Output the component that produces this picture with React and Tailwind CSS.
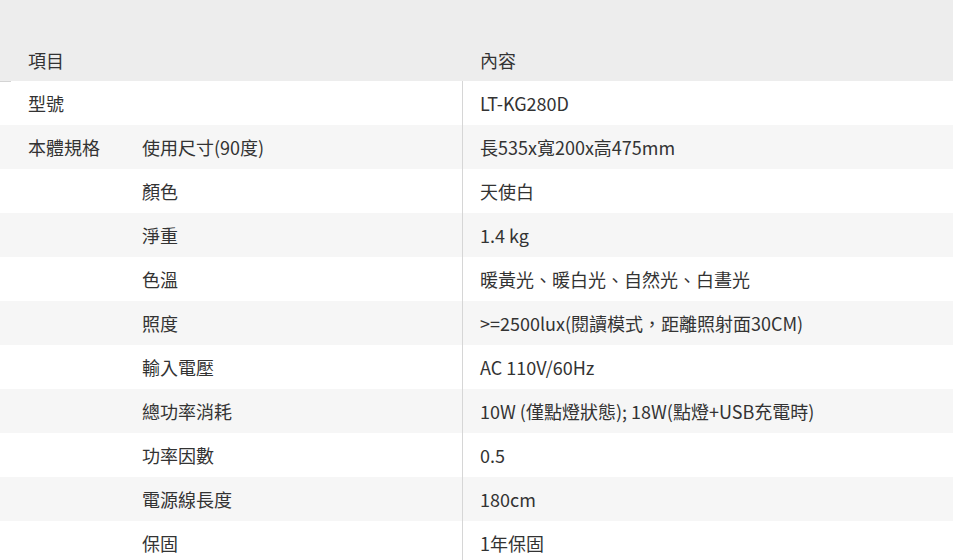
const rows = [
  { a: '型號', b: '', c: 'LT-KG280D' },
  { a: '本體規格', b: '使用尺寸(90度)', c: '長535x寬200x高475mm' },
  { a: '', b: '顏色', c: '天使白' },
  { a: '', b: '淨重', c: '1.4 kg' },
  { a: '', b: '色溫', c: '暖黃光、暖白光、自然光、白晝光' },
  { a: '', b: '照度', c: '>=2500lux(閱讀模式，距離照射面30CM)' },
  { a: '', b: '輸入電壓', c: 'AC 110V/60Hz' },
  { a: '', b: '總功率消耗', c: '10W (僅點燈狀態); 18W(點燈+USB充電時)' },
  { a: '', b: '功率因數', c: '0.5' },
  { a: '', b: '電源線長度', c: '180cm' },
  { a: '', b: '保固', c: '1年保固' },
];

export default function App() {
  return (
    <div
      className="w-[953px] h-[560px] overflow-hidden bg-white text-[18px] leading-[26px] text-[#333]"
      style={{ fontFamily: '"Noto Sans CJK TC", "Noto Sans", sans-serif' }}
    >
      <div className="flex h-[81px] items-end bg-[#ededed] pb-[8px]">
        <div className="w-[462px] pl-[28px]">項目</div>
        <div className="flex-1 pl-[18px]">內容</div>
      </div>
      {rows.map((r, i) => (
        <div
          key={i}
          className={`relative flex h-[44px] items-center ${i % 2 === 1 ? 'bg-[#f6f6f6]' : 'bg-white'}`}
        >
          {i === 0 && <div className="absolute left-0 top-0 h-px w-[11px] bg-[#d4d4d4]" />}
          <div className="w-[142px] shrink-0 pl-[28px]">{r.a}</div>
          <div className="w-[320px] shrink-0">{r.b}</div>
          <div className="flex h-full flex-1 items-center border-l border-[#d6d6d6] pl-[17px]">{r.c}</div>
        </div>
      ))}
    </div>
  );
}
